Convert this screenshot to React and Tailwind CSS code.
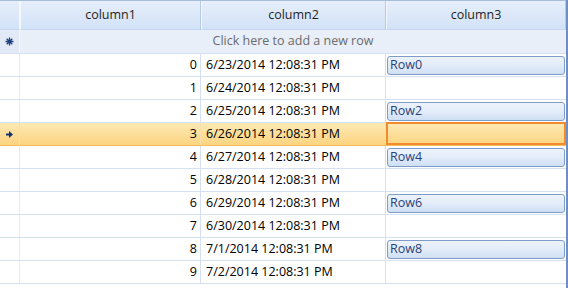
const rows = Array.from({ length: 10 }, (_, i) => {
    const d = new Date(2014, 5, 23 + i)
    return {
        id: i,
        date: `${d.getMonth() + 1}/${d.getDate()}/${d.getFullYear()} 12:08:31 PM`,
        label: i % 2 === 0 ? `Row${i}` : null,
    }
})

const cols = 'grid grid-cols-[20px_181px_185px_180px]'

export default function App() {
    const current = 3

    return (
        <div className="w-[568px] h-[288px] bg-white overflow-hidden text-[12.5px] text-black" style={{ fontFamily: '"Segoe UI", "Open Sans", "Noto Sans", sans-serif' }}>
            <div className="flex h-full">
                <div className="w-[566px] flex flex-col border-t border-[#a6bcdb]">
                    {/* Header */}
                    <div className={`${cols} h-[29px]`}>
                        <div className="bg-gradient-to-b from-[#e6effb] to-[#d2e2f7] border-r border-[#f4f8fd] border-b border-b-[#c5d7ef]" />
                        {['column1', 'column2', 'column3'].map((c) => (
                            <div key={c} className="bg-gradient-to-b from-[#e6effb] to-[#d2e2f7] border-l border-[#f4f8fd] border-r border-r-[#b6cae6] border-b border-b-[#c5d7ef] flex items-center justify-center text-[#1e1e1e]">
                                {c}
                            </div>
                        ))}
                    </div>

                    {/* New row */}
                    <div className={`${cols} h-[24px] border-b border-[#d5e1f2]`}>
                        <div className="bg-[#e2eaf7] border-r border-[#f4f8fd] flex items-center justify-center">
                            <svg width="9" height="9" viewBox="0 0 9 9">
                                <path d="M4.5 0.5v8M0.5 4.5h8M1.7 1.7l5.6 5.6M7.3 1.7l-5.6 5.6" stroke="#1c3f7e" strokeWidth="1.3" />
                                <circle cx="4.5" cy="4.5" r="1.6" fill="#1c3f7e" />
                            </svg>
                        </div>
                        <div className="col-span-3 bg-[#e8eff9] flex items-center justify-center text-[#6b6b6b]">
                            Click here to add a new row
                        </div>
                    </div>

                    {/* Data rows */}
                    {rows.map((r) => {
                        const sel = r.id === current
                        return (
                            <div
                                key={r.id}
                                className={`${cols} h-[23px] border-b ${sel ? 'border-[#f6bd5b] bg-gradient-to-b from-[#fde9b5] to-[#fcd47f]' : 'border-[#d5e1f2] bg-white'}`}
                            >
                                <div className={`border-r ${sel ? 'border-[#f7e0ad]' : 'border-[#e3ebf6]'} flex items-center justify-center`}>
                                    {sel && (
                                        <svg width="9" height="9" viewBox="0 0 9 9">
                                            <path d="M1 3.5h3V1l4 3.5L4 8V5.5H1z" fill="#15316b" />
                                        </svg>
                                    )}
                                </div>
                                <div className={`border-r ${sel ? 'border-[#f7e0ad]' : 'border-[#d5e1f2]'} flex items-center justify-end pr-[3px]`}>
                                    {r.id}
                                </div>
                                <div className={`border-r ${sel ? 'border-[#f7e0ad]' : 'border-[#d5e1f2]'} flex items-center pl-[5px]`}>
                                    {r.date}
                                </div>
                                <div className={`flex items-center ${sel ? 'border-2 border-[#f28a2e] -mt-px' : 'px-[1px]'}`}>
                                    {r.label && (
                                        <div className="w-full h-[19px] rounded-[3px] border border-[#7f9cc9] bg-gradient-to-b from-[#edf3fc] via-[#e3ecf9] to-[#cfdff4] flex items-center px-[2px] text-[#2b3f7d]">
                                            {r.label}
                                        </div>
                                    )}
                                </div>
                            </div>
                        )
                    })}
                </div>
                <div className="w-[2px] bg-[#6e8fc6]" />
            </div>
        </div>
    )
}
